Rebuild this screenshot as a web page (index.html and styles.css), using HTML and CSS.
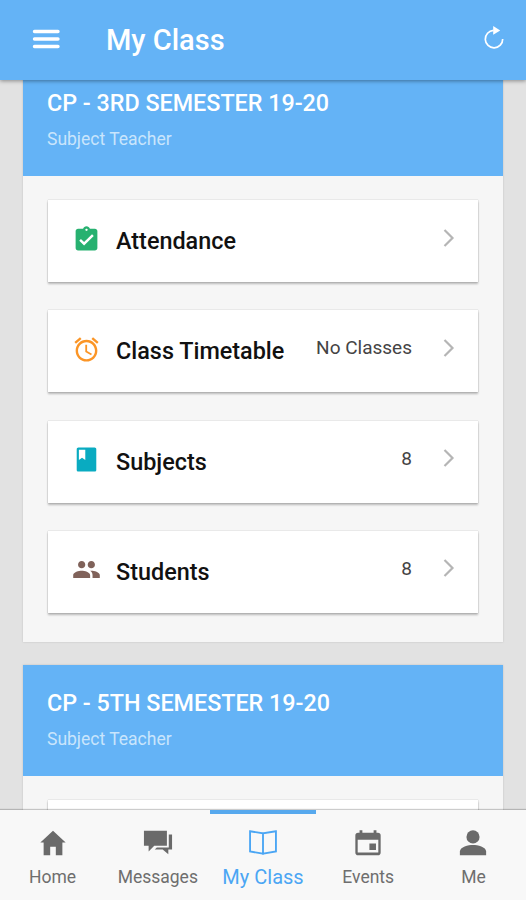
FILE: index.html
```html
<!DOCTYPE html>
<html lang="en">
<head>
    <meta charset="UTF-8">
    <meta name="viewport" content="width=device-width, initial-scale=1.0">
    <title>My Class</title>
    <link rel="stylesheet" href="styles.css">
</head>
<body>
    <header class="toolbar">
        <svg class="menu-icon" viewBox="0 0 30 20"><path d="M3.500 2.500h23.500M3.500 10h23.500M3.500 17.500h23.500"/></svg>
        <h1>My Class</h1>
        <svg class="refresh-icon" viewBox="0 0 22 24"><path class="ring" d="M10.500 4.400A8.700 8.700 0 1 0 19.700 13"/><path class="tip" d="M10.200 0l7 4.400-7 4.300z"/></svg>
    </header>

    <main class="content">
        <section class="card first">
            <div class="card-header">
                <h2>CP - 3RD SEMESTER 19-20</h2>
                <p>Subject Teacher</p>
            </div>
            <div class="card-body">
                <a class="item">
                    <svg class="icon green" viewBox="0 0 24 24"><path d="M19 3h-4.180C14.400 1.840 13.300 1 12 1s-2.400.840-2.820 2H5c-1.100 0-2 .900-2 2v14c0 1.100.900 2 2 2h14c1.100 0 2-.900 2-2V5c0-1.100-.900-2-2-2zm-7 0c.550 0 1 .450 1 1s-.450 1-1 1-1-.450-1-1 .450-1 1-1zm-2 14l-4-4 1.410-1.410L10 14.170l6.590-6.590L18 9l-8 8z"/></svg>
                    <span class="label">Attendance</span>
                    <svg class="arrow" viewBox="0 0 12 20"><path d="M1.500 2l8 8-8 8"/></svg>
                </a>
                <a class="item">
                    <svg class="icon orange" viewBox="0 0 24 24"><path d="M22 5.720l-4.600-3.860-1.290 1.530 4.600 3.860L22 5.720zM7.880 3.390L6.600 1.860 2 5.710l1.290 1.530 4.590-3.850zM12.500 8H11v6l4.750 2.850.750-1.230-4-2.370V8zM12 4c-4.970 0-9 4.030-9 9s4.020 9 9 9c4.970 0 9-4.030 9-9s-4.030-9-9-9zm0 16c-3.870 0-7-3.130-7-7s3.130-7 7-7 7 3.130 7 7-3.130 7-7 7z"/></svg>
                    <span class="label">Class Timetable</span>
                    <span class="value">No Classes</span>
                    <svg class="arrow" viewBox="0 0 12 20"><path d="M1.500 2l8 8-8 8"/></svg>
                </a>
                <a class="item">
                    <svg class="icon teal" viewBox="0 0 24 24"><path d="M18.700 2H5.300c-.800 0-1.400.600-1.400 1.400v17.200c0 .800.600 1.400 1.400 1.400h13.400c.800 0 1.400-.600 1.400-1.400V3.400c0-.800-.600-1.400-1.400-1.400zM5.700 4h5.300v8.500L8.300 10.500 5.700 12.500V4z"/></svg>
                    <span class="label">Subjects</span>
                    <span class="value">8</span>
                    <svg class="arrow" viewBox="0 0 12 20"><path d="M1.500 2l8 8-8 8"/></svg>
                </a>
                <a class="item">
                    <svg class="icon brown" viewBox="0 0 24 24"><path d="M16 11c1.660 0 2.990-1.340 2.990-3S17.660 5 16 5s-3 1.340-3 3 1.340 3 3 3zm-8 0c1.660 0 2.990-1.340 2.990-3S9.660 5 8 5 5 6.340 5 8s1.340 3 3 3zm0 2c-2.330 0-7 1.170-7 3.500V19h14v-2.500c0-2.330-4.670-3.500-7-3.500zm8 0c-.290 0-.620.020-.970.050 1.160.840 1.970 1.970 1.970 3.450V19h6v-2.500c0-2.330-4.670-3.500-7-3.500z"/></svg>
                    <span class="label">Students</span>
                    <span class="value">8</span>
                    <svg class="arrow" viewBox="0 0 12 20"><path d="M1.500 2l8 8-8 8"/></svg>
                </a>
            </div>
        </section>

        <section class="card">
            <div class="card-header">
                <h2>CP - 5TH SEMESTER 19-20</h2>
                <p>Subject Teacher</p>
            </div>
            <div class="card-body">
                <a class="item"></a>
            </div>
        </section>
    </main>

    <nav class="tabs">
        <a class="tab">
            <svg viewBox="0 0 32 32"><path d="M16 3L2.500 15.500H6V29h7v-9h6v9h7V15.500h3.500z"/></svg>
            <span>Home</span>
        </a>
        <a class="tab">
            <svg viewBox="0 0 32 32"><path d="M1 3h24.500v16H12l-6 6v-6H1z"/><path d="M27.500 7H31v16h-4v5l-6-5h-8.500l2.300-2.300H27.500z"/></svg>
            <span>Messages</span>
        </a>
        <a class="tab active">
            <svg viewBox="0 0 32 32"><path d="M2.200 3.500l13.800 2.200v21.600L2.200 25.100zM29.800 3.500L16 5.700v21.600l13.800-2.200z"/></svg>
            <span>My Class</span>
        </a>
        <a class="tab">
            <svg viewBox="0 0 32 32"><path fill-rule="evenodd" d="M7 2.500h3V5h12V2.500h3V5h1.500a3 3 0 0 1 3 3v18a3 3 0 0 1-3 3h-21a3 3 0 0 1-3-3V8a3 3 0 0 1 3-3H7zM5 12.500V26h22V12.500zM17.500 16.500h7v7h-7z"/></svg>
            <span>Events</span>
        </a>
        <a class="tab">
            <svg viewBox="0 0 32 32"><circle cx="16" cy="9.500" r="7"/><path d="M2 29v-4c0-5 9-7 14-7s14 2 14 7v4z"/></svg>
            <span>Me</span>
        </a>
    </nav>
</body>
</html>
```
FILE: styles.css
```css
* {
    box-sizing: border-box;
}
body {
    margin: 0;
    height: 900px;
    display: flex;
    flex-direction: column;
    overflow: hidden;
    font-family: Roboto, sans-serif;
    background: #e2e2e2;
}
h1, h2, p {
    margin: 0;
    font-weight: 500;
}
svg {
    flex: none;
}
.toolbar {
    position: relative;
    z-index: 1;
    flex: none;
    display: flex;
    align-items: center;
    height: 80px;
    padding: 0 21px 0 31px;
    color: #fff;
    background: #64b3f6;
    box-shadow: 0 1px 4px rgba(0, 0, 0, 0.4);
}
.menu-icon {
    width: 30px;
    height: 20px;
    margin-bottom: 2px;
    fill: none;
    stroke: #fff;
    stroke-width: 3.4;
    stroke-linecap: round;
}
.toolbar h1 {
    flex: 1;
    margin-left: 45px;
    font-size: 29px;
    line-height: 34px;
}
.refresh-icon {
    width: 22px;
    height: 24px;
    margin-bottom: 5px;
}
.refresh-icon .ring {
    fill: none;
    stroke: #fff;
    stroke-width: 1.7;
}
.refresh-icon .tip {
    fill: #fff;
}
.content {
    flex: 1;
    min-height: 0;
    padding: 0 23px;
    overflow: hidden;
}
.card {
    margin-bottom: 23px;
    background: #f6f6f6;
    box-shadow: 0 0 2px rgba(0, 0, 0, 0.15);
}
.card.first {
    margin-top: -15px;
}
.card-header {
    height: 111px;
    padding: 24px 24px 0;
    color: #fff;
    background: #64b3f6;
}
.card-header h2 {
    font-size: 23.3px;
    line-height: 28px;
}
.card-header p {
    margin-top: 11px;
    font-size: 17.5px;
    font-weight: 400;
    line-height: 22px;
    color: #c9e5fc;
}
.card-body {
    display: flex;
    flex-direction: column;
    gap: 28.3px;
    padding: 24px 25px 29px;
}
.item {
    display: flex;
    align-items: center;
    height: 82px;
    padding: 0 23px 0 24px;
    background: #fff;
    box-shadow: 0 0 1px rgba(0, 0, 0, 0.3), 0 2px 2px rgba(0, 0, 0, 0.25);
}
.icon {
    width: 29px;
    height: 29px;
    margin-bottom: 4px;
}
.green {
    fill: #27b170;
}
.orange {
    fill: #fb9526;
}
.teal {
    fill: #09abc1;
}
.brown {
    fill: #80625a;
}
.label {
    flex: 1;
    margin-left: 15px;
    font-size: 23.4px;
    font-weight: 500;
    color: #111;
}
.value {
    margin-bottom: 7px;
    font-size: 19px;
    color: #444;
}
.arrow {
    width: 12px;
    height: 20px;
    margin: 0 0 7px 31px;
    fill: none;
    stroke: #b5b5b5;
    stroke-width: 2.2;
}
.tabs {
    position: relative;
    flex: none;
    display: flex;
    height: 90px;
    background: #f8f8f8;
    box-shadow: 0 -1px 1px rgba(0, 0, 0, 0.2);
}
.tab {
    flex: 1;
    display: flex;
    flex-direction: column;
    align-items: center;
    padding-top: 14px;
    border-top: 4px solid transparent;
    font-size: 17.5px;
    line-height: 22px;
    color: #6e6e6e;
}
.tab svg {
    width: 30px;
    height: 30px;
    margin-bottom: 8px;
    fill: #6a6a6a;
}
.tab.active {
    border-top-color: #57a9ee;
    font-size: 20px;
    color: #4ba6f4;
}
.tab.active svg {
    fill: none;
    stroke: #4ba6f4;
    stroke-width: 2;
}
```
